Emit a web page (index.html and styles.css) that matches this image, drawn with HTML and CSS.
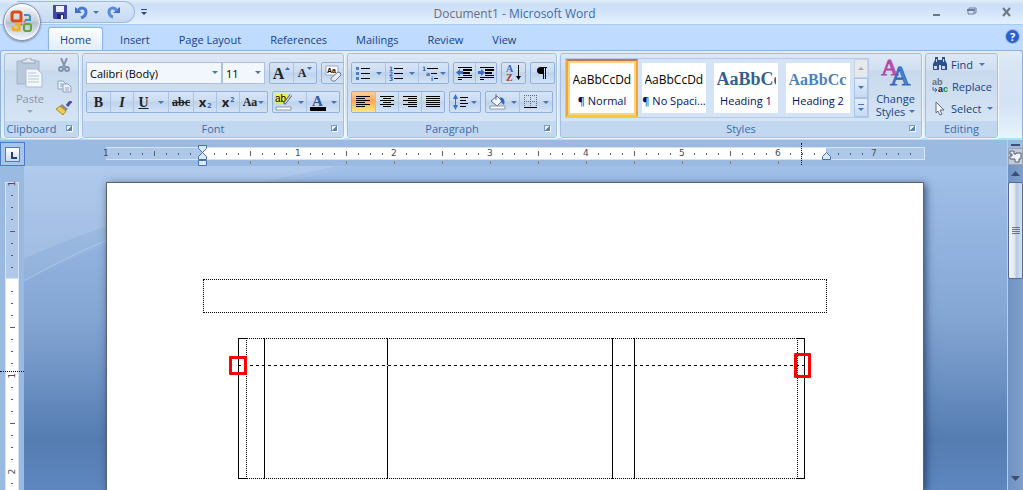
FILE: index.html
```html
<!DOCTYPE html>
<html lang="en">
<head>
    <meta charset="UTF-8">
    <title>Document1 - Microsoft Word</title>
    <link rel="stylesheet" href="styles.css">
</head>

<body>
    <header class="titlebar">
        <div class="quick-access">
            <div class="qat-pill">
                <button class="plain" aria-label="Save">
                    <svg width="14" height="14"><path d="M0 0h14v14H1l-1-1z" fill="#4448a8"/><path d="M3 1h8v6H3z" fill="#eef2ff"/><path d="M4 9h7v5H4z" fill="#23266e"/><path d="M8 10h2v4H8z" fill="#fff"/></svg>
                </button>
                <button class="plain undo" aria-label="Undo">
                    <svg width="13" height="13"><path d="M0 1v6h7z" fill="#3d6fc4"/><path d="M3 5c2-4 8-4 8 1 0 3-2 5-5 6" fill="none" stroke="#4a7bd0" stroke-width="3"/></svg>
                    <i class="caret"></i>
                </button>
                <button class="plain" aria-label="Redo">
                    <svg width="13" height="13"><path d="M13 1v6H6z" fill="#3d6fc4"/><path d="M10 5C8 1 2 1 2 6c0 3 1 4 4 5" fill="none" stroke="#5a8bd8" stroke-width="3"/></svg>
                </button>
            </div>
            <button class="plain" aria-label="Customize Quick Access Toolbar">
                <svg width="6" height="7"><path d="M0 0h6v1H0zM0 3h6L3 6z" fill="#2f4a80"/></svg>
            </button>
        </div>
        <div class="title"><span>Document1</span> - Microsoft Word</div>
        <div class="window-controls">
            <button class="plain" aria-label="Minimize"><svg width="10" height="10"><path d="M1 7h7v2H1z" fill="#6c7685"/></svg></button>
            <button class="plain" aria-label="Restore"><svg width="10" height="10"><path d="M2 3V1h7v5H7M1 3h6v4H1z" fill="none" stroke="#6c7f99"/><path d="M0 2h8v2H0z" fill="#6c7f99"/></svg></button>
            <button class="plain" aria-label="Close"><svg width="10" height="10"><path d="M1 1l7 8M8 1L1 9" stroke="#6c7685" stroke-width="2"/></svg></button>
        </div>
    </header>

    <button class="office-button" aria-label="Office Button">
        <svg width="24" height="24" fill="none" stroke-width="3">
            <rect x="2" y="2" width="9" height="9" rx="2" stroke="#dd4a16"/>
            <path d="M14 5h4q2 0 2 2v3h-5" stroke="#3b8fd6" stroke-width="2"/>
            <path d="M5 14h4v6H5q-2 0-2-2v-2" stroke="#f3b022"/>
            <rect x="14" y="14" width="7" height="7" rx="2" stroke="#5fa53a" stroke-width="2"/>
            <path d="M11 11h1v1h-1zM14 11h1v1h-1zM11 14h1v1h-1z" stroke="#c86a30" stroke-width="1"/>
        </svg>
    </button>

    <nav class="tabs">
        <a href="#" class="active">Home</a>
        <a href="#">Insert</a>
        <a href="#">Page Layout</a>
        <a href="#">References</a>
        <a href="#">Mailings</a>
        <a href="#">Review</a>
        <a href="#">View</a>
        <button class="plain help" aria-label="Help">?</button>
    </nav>

    <section class="ribbon">
        <div class="group clipboard">
            <div class="group-body">
                <button class="plain paste">
                    <svg width="28" height="30">
                        <path d="M1 3h22v23H1z" fill="#b9c8da" stroke="#a3b3c8"/>
                        <path d="M6 5V2h4V0h5v2h4v3z" fill="#dfe6ee" stroke="#97a6ba"/>
                        <path d="M10 11h11l5 5v13H10z" fill="#f4f8fc" stroke="#a9bdd6"/>
                        <path d="M12 15h8M12 18h11M12 21h11M12 24h11" stroke="#b5c6dc"/>
                    </svg>
                    <span>Paste</span>
                    <i class="caret"></i>
                </button>
                <div class="stack">
                    <button class="plain" aria-label="Cut">
                        <svg width="12" height="14" fill="none" stroke="#8496ae" stroke-width="2"><path d="M3 0l4 9M9 0L5 9"/><circle cx="3" cy="11" r="2"/><circle cx="9" cy="11" r="2"/></svg>
                    </button>
                    <button class="plain" aria-label="Copy">
                        <svg width="15" height="13" fill="#e8f0f9" stroke="#8fa5c2"><path d="M1 1h5l3 3v5H1z"/><path d="M6 4h5l3 3v5H6z"/><path d="M3 4h3M3 6h3M8 8h4M8 10h4"/></svg>
                    </button>
                    <button class="plain" aria-label="Format Painter">
                        <svg width="16" height="14"><path d="M15 0l-4 5" stroke="#4b4fa0" stroke-width="3"/><path d="M6 3l6 5-2 2-6-5z" fill="#8b8f98"/><path d="M4 5l6 5-3 4-7-6z" fill="#f0cb58" stroke="#b58a2a"/></svg>
                    </button>
                </div>
            </div>
            <div class="group-label">Clipboard<i class="launcher"></i></div>
        </div>

        <div class="group font">
            <div class="group-body rows">
                <div class="row">
                    <div class="combos">
                        <label class="combo"><select class="face" aria-label="Font"><option>Calibri (Body)</option></select><i class="caret"></i></label>
                        <label class="combo"><select class="size" aria-label="Font size"><option>11</option></select><i class="caret"></i></label>
                    </div>
                    <div class="btns">
                        <button class="serif big" aria-label="Grow Font">A<svg width="5" height="12"><path d="M0 3h5L2.500 0z" fill="#3f6db5"/></svg></button>
                        <button class="serif small" aria-label="Shrink Font">A<svg width="5" height="12"><path d="M0 0h5L2.500 3z" fill="#3f6db5"/></svg></button>
                    </div>
                    <div class="btns">
                        <button aria-label="Clear Formatting">
                            <svg width="17" height="17"><path d="M1 1h12v9H1z" fill="#fff" stroke="#9aa7ba"/><text x="2" y="8" class="tiny">Aa</text><path d="M6 13l7-6q3 0 3 3l-6 6q-4 1-4-3z" fill="#e8edf5" stroke="#6d7d97"/></svg>
                        </button>
                    </div>
                </div>
                <div class="row">
                    <div class="btns">
                        <button class="serif"><b>B</b></button>
                        <button class="serif"><em>I</em></button>
                        <button class="serif w36"><u>U</u><i class="caret"></i></button>
                        <button class="serif w26"><s>abc</s></button>
                        <button class="script">x<sub>2</sub></button>
                        <button class="script">x<sup>2</sup></button>
                        <button class="serif small w28">Aa<i class="caret"></i></button>
                    </div>
                    <div class="btns">
                        <button class="w34" aria-label="Text Highlight Color">
                            <svg width="18" height="17"><path d="M0 0h12v9H0z" fill="#f6ee4c"/><text x="0" y="8" class="ab">ab</text><path d="M16 1l-7 9" stroke="#6d7889" stroke-width="3"/><path d="M16 1l-6 8" stroke="#eef2f7"/><path d="M1 13h15v3H1z" fill="#fff" stroke="#8b98ab"/></svg>
                            <i class="caret"></i>
                        </button>
                        <button class="w34" aria-label="Font Color">
                            <svg width="16" height="17"><text x="2" y="12" class="color-a">A</text><path d="M0 13h16v4H0z" fill="#000"/></svg>
                            <i class="caret"></i>
                        </button>
                    </div>
                </div>
            </div>
            <div class="group-label">Font<i class="launcher"></i></div>
        </div>

        <div class="group paragraph">
            <div class="group-body rows">
                <div class="row">
                    <div class="btns">
                        <button class="w34" aria-label="Bullets">
                            <svg width="15" height="14"><path d="M0 1h3v3H0zM0 6h3v3H0zM0 11h3v3H0z" fill="#4f7cc4"/><path d="M5 2h9v1H5zM5 7h9v1H5zM5 12h9v1H5z"/></svg>
                            <i class="caret"></i>
                        </button>
                        <button class="w34" aria-label="Numbering">
                            <svg width="15" height="15"><text x="0" y="5" class="num">1</text><text x="0" y="10" class="num">2</text><text x="0" y="15" class="num">3</text><path d="M5 2h9v1H5zM5 7h9v1H5zM5 12h9v1H5z"/></svg>
                            <i class="caret"></i>
                        </button>
                        <button class="w30" aria-label="Multilevel List">
                            <svg width="17" height="15"><text x="0" y="5" class="num">1</text><text x="4" y="10" class="num">a</text><text x="9" y="15" class="num">i</text><path d="M5 2h11v1H5zM9 7h6v1H9zM12 12h4v1h-4z"/></svg>
                            <i class="caret"></i>
                        </button>
                    </div>
                    <div class="btns">
                        <button class="w22" aria-label="Decrease Indent">
                            <svg width="17" height="15"><path d="M2 1h14v1H2zM7 3h9v2H7zM7 6h7v2H7zM7 9h9v1H7zM2 11h14v1H2zM2 13h4v1H2z"/><path d="M0 6.500L4 3v2h3v3H4v2z" fill="#3a6fc8"/></svg>
                        </button>
                        <button class="w22" aria-label="Increase Indent">
                            <svg width="17" height="15"><path d="M2 1h14v1H2zM7 3h9v2H7zM7 6h7v2H7zM7 9h9v1H7zM2 11h14v1H2zM2 13h4v1H2z"/><path d="M7 6.500L3 3v2H0v3h3v2z" fill="#3a6fc8"/></svg>
                        </button>
                    </div>
                    <div class="btns">
                        <button aria-label="Sort">
                            <svg width="16" height="18"><text x="0" y="8" class="sort" fill="#3d63b4">A</text><text x="0" y="17" class="sort" fill="#b2352c">Z</text><path d="M12 1h1v11h2l-2.500 4L10 12h2z"/></svg>
                        </button>
                    </div>
                    <div class="btns">
                        <button aria-label="Show/Hide ¶">
                            <svg width="11" height="13"><path d="M4 0h6v1H9v11H8V1H7v11H6V7H4Q0 7 0 3.500 0 0 4 0z"/></svg>
                        </button>
                    </div>
                </div>
                <div class="row">
                    <div class="btns">
                        <button class="on" aria-label="Align Left"><svg width="15" height="12"><path d="M0 0h14v1H0zM0 2h9v1H0zM0 4h14v1H0zM0 6h9v1H0zM0 8h14v1H0zM0 10h9v1H0z"/></svg></button>
                        <button aria-label="Center"><svg width="15" height="12"><path d="M0 0h14v1H0zM3 2h8v1H3zM0 4h14v1H0zM3 6h8v1H3zM0 8h14v1H0zM3 10h8v1H3z"/></svg></button>
                        <button aria-label="Align Right"><svg width="15" height="12"><path d="M0 0h14v1H0zM5 2h9v1H5zM0 4h14v1H0zM5 6h9v1H5zM0 8h14v1H0zM5 10h9v1H5z"/></svg></button>
                        <button aria-label="Justify"><svg width="15" height="12"><path d="M0 0h14v1H0zM0 2h14v1H0zM0 4h14v1H0zM0 6h14v1H0zM0 8h14v1H0zM0 10h14v1H0z"/></svg></button>
                    </div>
                    <div class="btns">
                        <button class="w32" aria-label="Line Spacing">
                            <svg width="15" height="17"><path d="M2 4h1v9H2zM0 5l2.500-5L5 5zM0 11h5l-2.500 5z" fill="#3a6fc8"/><path d="M7 3h8v1H7zM7 6h6v1H7zM7 9h8v1H7zM7 12h6v1H7z"/></svg>
                            <i class="caret"></i>
                        </button>
                    </div>
                    <div class="btns">
                        <button class="w34" aria-label="Shading">
                            <svg width="17" height="16"><path d="M2 7l6-5 5 5-5 5z" fill="#f2f5fa" stroke="#5d6d88"/><path d="M7 0v6" stroke="#5d6d88"/><path d="M11 3q6 1 4 8l-3-3z" fill="#2f66b8"/><path d="M1 12h15v3H1z" fill="#fff" stroke="#8b98ab"/></svg>
                            <i class="caret"></i>
                        </button>
                        <button class="w34" aria-label="Borders">
                            <svg width="14" height="14"><path d="M.5 0v12M6.500 0v12M12.500 0v12M0 .5h13M0 6.500h13" fill="none" stroke="#5b6880" stroke-dasharray="1 1"/><path d="M0 12h13v1H0z"/></svg>
                            <i class="caret"></i>
                        </button>
                    </div>
                </div>
            </div>
            <div class="group-label">Paragraph<i class="launcher"></i></div>
        </div>

        <div class="group styles">
            <div class="group-body">
                <div class="gallery">
                    <button class="style selected"><span class="card"><span class="sample">AaBbCcDd</span><span class="name">¶ Normal</span></span></button>
                    <button class="style"><span class="card"><span class="sample">AaBbCcDd</span><span class="name">¶ No Spaci...</span></span></button>
                    <button class="style"><span class="card"><span class="sample h1">AaBbCc</span><span class="name">Heading 1</span></span></button>
                    <button class="style"><span class="card"><span class="sample h2">AaBbCc</span><span class="name">Heading 2</span></span></button>
                    <div class="gallery-scroll">
                        <button class="off" aria-label="Previous styles"><i class="caret up"></i></button>
                        <button aria-label="Next styles"><i class="caret"></i></button>
                        <button class="more" aria-label="More styles"><i class="caret"></i></button>
                    </div>
                </div>
                <button class="plain change-styles">
                    <svg width="30" height="29"><text x="0" y="17" class="big-a">A</text><text x="9" y="27" class="big-a blue">A</text></svg>
                    <span>Change</span>
                    <span>Styles <i class="caret"></i></span>
                </button>
            </div>
            <div class="group-label">Styles<i class="launcher"></i></div>
        </div>

        <div class="group editing">
            <div class="group-body">
                <button class="plain">
                    <svg width="16" height="14"><path d="M3 0h3v3h4V0h3v3l2 4v6H9V8H7v5H1V7l2-4z" fill="#2d4f8c"/><path d="M2 9h3v3H2zM10 9h3v3h-3zM4 2h1v3H4zM11 2h1v3h-1z" fill="#c9d9f0"/></svg>
                    <span>Find</span><i class="caret"></i>
                </button>
                <button class="plain">
                    <svg width="17" height="16"><text x="0" y="7" class="rep" fill="#6a6f78">ab</text><text x="6" y="14" class="rep" fill="#1d8a2c"><tspan fill="#222">a</tspan>c</text><path d="M1 9v3h4M3 10l2 2-2 2" fill="none" stroke="#3a62ac"/></svg>
                    <span>Replace</span>
                </button>
                <button class="plain">
                    <svg width="16" height="15"><path d="M4 1l8 8H8l2 4-2 1-2-4-2 2z" fill="#fff" stroke="#5a6a86"/></svg>
                    <span>Select</span><i class="caret"></i>
                </button>
            </div>
            <div class="group-label">Editing</div>
        </div>
    </section>

    <main class="workspace">
        <button class="tab-stop" aria-label="Left tab"><svg width="15" height="15"><path d="M5 4h2v5h4v2H5z" fill="#24406e"/></svg></button>

        <div class="ruler-row">
            <div class="ruler">
                <div class="inch margin"><span>1</span></div>
                <div class="inch"></div>
                <div class="inch"><span>1</span></div>
                <div class="inch"><span>2</span></div>
                <div class="inch"><span>3</span></div>
                <div class="inch"><span>4</span></div>
                <div class="inch"><span>5</span></div>
                <div class="inch split"><span>6</span></div>
                <div class="inch margin last"><span>7</span></div>
                <svg class="indent left" width="9" height="22" fill="#dfe8f5" stroke="#4670b4"><path d="M.5.500h8v3l-4 4-4-4zM.5 14.500v-3l4-4 4 4v3zM.5 15.500h8v5h-8z"/></svg>
                <svg class="indent right" width="9" height="9" fill="#dfe8f5" stroke="#4670b4"><path d="M.5 7.500v-3l4-4 4 4v3z"/></svg>
                <div class="guide"></div>
            </div>
        </div>

        <div class="vruler">
            <div class="vinch margin"><span>1</span></div>
            <div class="vinch"></div>
            <div class="vinch"><span>1</span></div>
            <div class="vinch"><span>2</span></div>
            <div class="guide"></div>
        </div>

        <div class="canvas">
            <svg class="swoosh" width="330" height="130">
                <path d="M0 0h313Q110 42 0 93z" fill="#fff" opacity=".16"/>
                <path d="M0 93Q110 42 313 0h17Q150 42 0 115z" fill="#fff" opacity=".06"/>
                <path d="M0 115Q60 80 150 48" fill="none" stroke="#c5daf4" stroke-width="1" opacity=".5"/>
            </svg>
            <div class="page">
                <div class="header-box"></div>
                <div class="table-wrap">
                    <table>
                        <tr>
                            <td class="c1"></td>
                            <td class="c2"></td>
                            <td class="c3"></td>
                            <td class="c4"></td>
                            <td class="c5"></td>
                            <td class="c6"></td>
                            <td class="c7"></td>
                        </tr>
                    </table>
                    <div class="drag-line"></div>
                    <div class="mark start"></div>
                    <div class="mark end"></div>
                </div>
            </div>
        </div>

        <div class="scrollbar">
            <div class="splitter"></div>
            <button class="ruler-toggle" aria-label="View Ruler"><svg width="13" height="13"><path d="M1 4V1h4v3h2V3h5v6h-2v3H6V9H1V6h2V4z" fill="#eef1f6" stroke="#4f5b78"/></svg></button>
            <button class="arrow" aria-label="Scroll up"><svg width="9" height="5"><path d="M0 5h9L4.500 0z" fill="#3f4d75"/></svg></button>
            <div class="track"><div class="thumb"></div></div>
            <button class="arrow" aria-label="Scroll down"><svg width="9" height="5"><path d="M0 0h9L4.500 5z" fill="#3f4d75"/></svg></button>
        </div>
    </main>
</body>
</html>
```
FILE: styles.css
```css
* {
    box-sizing: border-box;
    margin: 0;
    padding: 0;
}

body {
    display: flex;
    flex-direction: column;
    height: 100vh;
    overflow: hidden;
    position: relative;
    background: #bfdbff;
    font-family: 'Open Sans', 'Noto Sans', sans-serif;
    font-size: 11px;
    line-height: 13px;
    color: #15428b;
}

button {
    border: none;
    background: none;
    font: inherit;
    color: inherit;
}

svg {
    display: block;
    flex: none;
}

a {
    color: inherit;
    text-decoration: none;
}

.plain {
    display: flex;
    align-items: center;
}

.caret {
    display: inline-block;
    flex: none;
    border: 3px solid transparent;
    border-top-color: #4a76b5;
    border-bottom: none;
}

.caret.up {
    border-top: none;
    border-bottom: 3px solid #a4aab4;
}

/* title bar */

.titlebar {
    display: grid;
    grid-template-columns: 1fr auto 1fr;
    align-items: center;
    height: 25px;
    padding: 0 11px 0 17px;
    background: linear-gradient(#e4eefb, #cbdff7 20%, #d6e6fa 60%, #e6f0fd);
    border-bottom: 1px solid #a5ccf4;
}

.quick-access {
    display: flex;
    align-items: center;
    gap: 6px;
}

.qat-pill {
    display: flex;
    align-items: center;
    gap: 8px;
    height: 22px;
    padding: 0 14px 0 36px;
    border: 1px solid #9dbbe0;
    border-left: none;
    border-radius: 0 11px 11px 0;
    background: linear-gradient(#dbe8f8, #c6daf3);
}

.undo {
    gap: 5px;
}

.title {
    padding-top: 3px;
    font-size: 12px;
    line-height: 16px;
    color: #3e6aaa;
}

.title span {
    color: #696f79;
}

.window-controls {
    display: flex;
    justify-content: flex-end;
    gap: 25px;
}

.office-button {
    position: absolute;
    left: 3px;
    top: 3px;
    display: flex;
    align-items: center;
    justify-content: center;
    width: 38px;
    height: 38px;
    border: 1px solid #8494ad;
    border-radius: 50%;
    background: linear-gradient(#fafcfe, #c6cdd8 48%, #b4bfd0 52%, #f4f8fd);
    box-shadow: 0 1px 2px #7a8ba8, inset 0 0 2px 1px #fff;
}

/* tabs */

.tabs {
    display: flex;
    align-items: flex-end;
    gap: 5px;
    height: 25px;
    padding: 0 4px 0 48px;
}

.tabs a {
    height: 22px;
    padding: 4px 11px 0;
    border: 1px solid transparent;
    border-bottom: none;
}

.tabs .active {
    height: 23px;
    padding-top: 5px;
    border-color: #8db2e3;
    border-radius: 3px 3px 0 0;
    background: linear-gradient(#fdfeff, #e1ecfa);
    box-shadow: 0 0 2px #7de0f0;
}

.tabs .help {
    justify-content: center;
    width: 13px;
    height: 13px;
    margin: 0 0 7px auto;
    border-radius: 50%;
    background: #2a5fd0;
    box-shadow: 0 0 0 1px #9fb8e0;
    color: #fff;
    font-weight: bold;
}

/* ribbon */

.ribbon {
    display: flex;
    gap: 3px;
    height: 90px;
    padding: 2px 3px;
    border: 1px solid #8db2e3;
    border-bottom: 2px solid #9ee9f5;
    border-radius: 3px;
    background: linear-gradient(#e3ecf7, #d8e5f4 18%, #d3e2f5 60%, #e7f4fd);
}

.group {
    display: flex;
    flex-direction: column;
    height: 85px;
    border: 1px solid #a5bfdf;
    border-radius: 3px;
    background: linear-gradient(#dee8f5, #d1dff0 16px, #c9d9ed 17px, #d9e8f7);
    box-shadow: 1px 1px 0 #f2f8ff;
    overflow: hidden;
}

.group-body {
    display: flex;
    flex: 1;
}

.group-label {
    position: relative;
    height: 16px;
    background: #c2d8f0;
    color: #3e6aaa;
    line-height: 15px;
    text-align: center;
}

.launcher {
    position: absolute;
    right: 5px;
    top: 4px;
    width: 7px;
    height: 7px;
    border: 1px solid #7c9cc6;
    border-right-color: #fff;
    border-bottom-color: #fff;
    background: linear-gradient(135deg, #e6effa 50%, #5d82b4 50%);
}

.clipboard { width: 75px; }
.font { width: 262px; }
.paragraph { width: 210px; }
.styles { width: 362px; }
.editing { width: 73px; }

.clipboard .group-label {
    padding-right: 20px;
}

.clipboard .group-body {
    gap: 10px;
    padding: 4px 6px 0 9px;
}

.paste {
    flex-direction: column;
    width: 32px;
    color: #8c95a3;
}

.paste span {
    margin: 4px 0 5px;
}

.paste .caret {
    border-top-color: #9aa5b4;
}

.stack {
    display: flex;
    flex-direction: column;
    gap: 8px;
}

.stack .plain {
    justify-content: center;
}

.rows {
    flex-direction: column;
    gap: 7px;
    padding: 8px 3px 0;
}

.row {
    display: flex;
    gap: 4px;
}

.combos {
    display: flex;
}

.combo {
    position: relative;
    display: block;
}

.combo .caret {
    position: absolute;
    right: 4px;
    top: 9px;
}

.combo select {
    display: block;
    height: 22px;
    padding: 0 3px;
    appearance: none;
    border: 1px solid #abc1de;
    border-radius: 0;
    background: #f2f7fd;
    font: inherit;
    color: #000;
}

.face { width: 136px; }
.size { width: 43px; }

.btns {
    display: flex;
    height: 22px;
    border: 1px solid #92b1dc;
    border-radius: 2px;
    background: linear-gradient(#d7e5f6, #cbdcf2 45%, #bdd2ec 50%, #d2e3f6);
}

.btns button {
    display: flex;
    align-items: center;
    justify-content: center;
    gap: 3px;
    width: 23px;
}

.btns button + button {
    border-left: 1px solid #aac4e6;
}

.btns .w22 { width: 21px; }
.btns .w26 { width: 25px; }
.btns .w28 { width: 28px; }
.btns .w30 { width: 30px; gap: 1px; }
.btns .w32 { width: 30px; }
.btns .w34 { width: 33px; gap: 5px; }
.btns .w36 { width: 35px; gap: 10px; }

.btns .on {
    background: linear-gradient(#fbd09a, #fca84e 45%, #fdd26b 80%, #fee58c);
}

.btns .serif {
    gap: 1px;
    font-family: 'Liberation Serif', serif;
    font-size: 14px;
    font-weight: bold;
    color: #222;
}

.btns .w36.serif {
    gap: 9px;
}

.btns .big {
    font-size: 16px;
}

.btns .small {
    font-size: 12px;
}

.serif s {
    font-size: 12px;
}

.btns .script {
    gap: 1px;
    font-size: 13px;
    font-weight: bold;
    color: #222;
}

.script sub,
.script sup {
    font-size: 7px;
    line-height: 8px;
    color: #2f66b8;
}

.script sub { padding-top: 7px; }
.script sup { padding-bottom: 5px; }

.tiny { font: bold 7px 'Liberation Sans', sans-serif; }
.ab { font: 10px 'Liberation Sans', sans-serif; }
.color-a { font: bold 15px 'Liberation Serif', serif; fill: #31589c; }
.num { font: bold 6px 'DejaVu Sans', sans-serif; fill: #3a62ac; }
.sort { font: bold 10px 'Liberation Serif', serif; }
.rep { font: bold 9px 'Liberation Sans', sans-serif; }
.big-a { font: 24px 'Liberation Serif', serif; fill: #c04fb4; stroke: #b04aa6; stroke-width: 1px; }
.big-a.blue { font-size: 28px; fill: #4a86d8; stroke: #3568b8; }

/* styles gallery */

.styles .group-body {
    gap: 4px;
    padding: 4px 3px 0 4px;
}

.gallery {
    display: flex;
    height: 60px;
    border: 1px solid #b4cae6;
    background: #d4e4f6;
}

.style {
    width: 72px;
    padding: 4px;
}

.style.selected {
    border: 2px solid #efa53c;
    border-top-color: #b07c50;
    border-bottom-color: #fbc63f;
    padding: 2px;
    background: #fdd27c;
}

.card {
    display: flex;
    flex-direction: column;
    align-items: center;
    gap: 6px;
    height: 50px;
    padding: 8px 2px 0;
    background: #fff;
    color: #000f6b;
    white-space: nowrap;
    overflow: hidden;
}

.sample {
    width: 59px;
    height: 17px;
    overflow: hidden;
    font-size: 12px;
    line-height: 17px;
    text-align: left;
    color: #000;
}

.sample.h1 {
    font: bold 18px/17px 'Liberation Serif', serif;
    color: #365f91;
}

.sample.h2 {
    font: bold 16px/17px 'Liberation Serif', serif;
    color: #4f81bd;
}

.gallery-scroll {
    display: flex;
    flex-direction: column;
    width: 14px;
}

.gallery-scroll button {
    display: flex;
    flex: 1;
    flex-direction: column;
    align-items: center;
    justify-content: center;
    border: 1px solid #a9c4e6;
    background: linear-gradient(#e4effb, #c6daf2);
}

.gallery-scroll .off {
    background: #e6e9ee;
    border-color: #cdd3dc;
}

.gallery-scroll .more::before {
    content: '';
    width: 6px;
    height: 1px;
    margin-bottom: 3px;
    background: #4a76b5;
}

.change-styles {
    flex: 1;
    flex-direction: column;
}

.change-styles svg {
    margin-bottom: 5px;
}

.change-styles span {
    display: flex;
    align-items: center;
    gap: 4px;
}

.editing .group-body {
    flex-direction: column;
    gap: 6px;
    padding: 2px 6px 0;
}

.editing .plain {
    gap: 3px;
    height: 16px;
}

.editing .caret {
    margin-left: 3px;
}

/* rulers and document area */

.workspace {
    display: grid;
    grid-template-columns: 24px 1fr 16px;
    grid-template-rows: 26px 1fr;
    flex: 1;
    min-height: 0;
    background: #9bbae1;
}

.tab-stop {
    display: flex;
    align-items: center;
    justify-content: center;
    width: 25px;
    height: 24px;
    margin-top: 2px;
    border: 1px solid #4a7ad0;
    background: #a9c5ee;
}

.tab-stop svg {
    border: 1px solid #4a7ad0;
    background: linear-gradient(#fff, #c9d9ef);
}

.ruler-row {
    display: flex;
    justify-content: center;
    padding-top: 7px;
}

.ruler {
    position: relative;
    display: flex;
    width: 819px;
    height: 13px;
    border: solid #d5e3f5;
    border-width: 1px 0;
}

.inch {
    position: relative;
    width: 96px;
    background:
        linear-gradient(#555d6e, #555d6e) 48px 3px / 1px 5px no-repeat,
        repeating-linear-gradient(90deg, #555d6e 0 1px, transparent 1px 12px) 12px 5px / 84px 2px no-repeat,
        #fff;
}

.inch::before,
.inch::after {
    content: '';
    position: absolute;
    left: 0;
    top: 13px;
    width: 1px;
    height: 3px;
    background: #808080;
}

.inch::after {
    left: 48px;
}

.inch.margin {
    background-color: #afc8ea;
}

.inch.margin::before,
.inch.margin::after,
.inch.split::after {
    display: none;
}

.inch.last {
    flex: 1;
    border-right: 1px solid #d5e3f5;
    background:
        repeating-linear-gradient(90deg, #555d6e 0 1px, transparent 1px 12px) 12px 5px / 32px 2px no-repeat,
        #afc8ea;
}

/* the right margin starts in the middle of this inch */
.inch.split {
    background:
        repeating-linear-gradient(90deg, #555d6e 0 1px, transparent 1px 12px) 12px 5px / 84px 2px no-repeat,
        linear-gradient(90deg, #fff 48px, #afc8ea 48px);
}

.inch span {
    position: absolute;
    left: -3px;
    top: -1px;
    font-family: 'DejaVu Sans', sans-serif;
    font-size: 9px;
    color: #454c5c;
}

.indent {
    position: absolute;
}

.indent.left {
    left: 92px;
    top: -3px;
}

.indent.right {
    left: 716px;
    top: 4px;
}

.ruler .guide {
    position: absolute;
    left: 695px;
    top: -5px;
    height: 24px;
    border-left: 1px dotted #000;
}

.vruler {
    position: relative;
    display: flex;
    flex-direction: column;
    align-items: center;
    padding-top: 16px;
    overflow: hidden;
}

.vinch {
    position: relative;
    flex: none;
    width: 14px;
    height: 96px;
    border: solid #d5e3f5;
    border-width: 0 1px;
    background:
        linear-gradient(#555d6e, #555d6e) 4px 48px / 5px 1px no-repeat,
        repeating-linear-gradient(#555d6e 0 1px, transparent 1px 12px) 5px 12px / 2px 84px no-repeat,
        #fff;
}

.vinch.margin {
    height: 97px;
    border-top-width: 1px;
    border-bottom-width: 1px;
    background-color: #afc8ea;
}

.vinch span {
    position: absolute;
    left: 0;
    top: -6px;
    width: 12px;
    font-family: 'DejaVu Sans', sans-serif;
    font-size: 9px;
    text-align: center;
    color: #454c5c;
    transform: rotate(-90deg);
}

.vruler .guide {
    position: absolute;
    left: 0;
    top: 205px;
    width: 24px;
    border-top: 1px dotted #000;
}

.canvas {
    position: relative;
    display: flex;
    justify-content: center;
    padding: 16px 1px 0 0;
    overflow: hidden;
    background: linear-gradient(#a0c0e9, #8fb0dc 94px, #84a6d3 150px, #6a8fc1 220px, #557db2 272px, #5e87c0 324px);
}

.swoosh {
    position: absolute;
    left: 0;
    top: 0;
}

.page {
    position: relative;
    width: 818px;
    padding: 96px 96px 0;
    border: 1px solid #5f6168;
    border-bottom: none;
    background: #fff;
    box-shadow: 2px 2px 8px rgba(20, 40, 80, 0.7);
}

.header-box {
    height: 34px;
    border: 1px dotted #000;
}

.table-wrap {
    position: relative;
    width: 567px;
    margin: 25px 0 0 35px;
}

table {
    width: 100%;
    height: 141px;
    table-layout: fixed;
    border-spacing: 0;
}

td {
    border: solid #000;
    border-width: 1px 0 1px 1px;
    border-top-style: dotted;
    border-bottom-style: dotted;
}

.c1 { width: 8px; border-style: solid; }
.c2 { width: 18px; border-left-style: dotted; }
.c3 { width: 123px; }
.c4 { width: 225px; }
.c5 { width: 22px; }
.c6 { width: 163px; }
.c7 { width: 8px; border-style: solid; border-left-style: dotted; border-right-width: 1px; }

.drag-line {
    position: absolute;
    left: 0;
    top: 27px;
    width: 100%;
    height: 1px;
    background: repeating-linear-gradient(90deg, #000 0 3px, #fff 3px 6px);
}

.mark {
    position: absolute;
    border: 3px solid #f00;
    border-radius: 1px;
}

.mark.start {
    left: -9px;
    top: 18px;
    width: 18px;
    height: 19px;
}

.mark.end {
    right: -6px;
    top: 15px;
    width: 17px;
    height: 25px;
}

/* scrollbar */

.scrollbar {
    grid-area: 1 / 3 / 3 / 4;
    display: flex;
    flex-direction: column;
    padding-bottom: 3px;
    border-left: 1px solid #b4cdf0;
    background: linear-gradient(90deg, #6f93c2, #809fca);
}

.splitter {
    height: 8px;
    border: solid #9bbae1;
    border-width: 4px 3px 2px;
    background: #3f4d75;
}

.ruler-toggle {
    display: flex;
    align-items: center;
    justify-content: center;
    height: 17px;
    border: 1px solid #98a3b6;
    background: #c3cbd9;
}

.arrow {
    display: flex;
    align-items: center;
    justify-content: center;
    height: 17px;
}

.track {
    flex: 1;
}

.thumb {
    display: flex;
    align-items: center;
    justify-content: center;
    height: 97px;
    border: 1px solid #55689c;
    border-radius: 2px;
    background: linear-gradient(90deg, #f4f6fa, #dfe5ee 45%, #b5c7de 55%, #d8e4f2);
}

.thumb::before {
    content: '';
    width: 8px;
    height: 7px;
    background: repeating-linear-gradient(#6c7685 0 1px, transparent 1px 2px);
}
```
